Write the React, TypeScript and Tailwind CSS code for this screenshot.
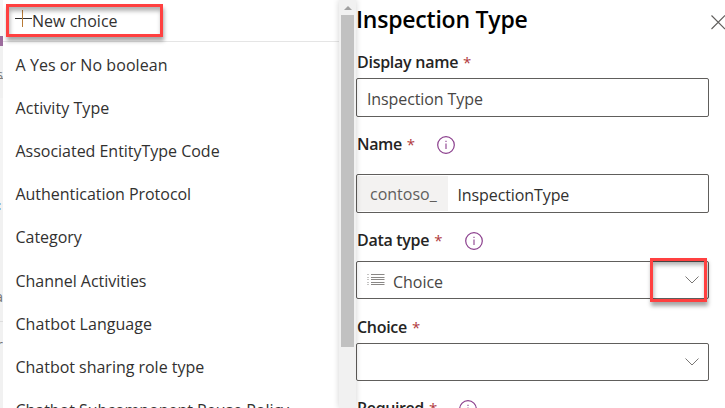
import React from "react";

const choices = [
  { label: "A Yes or No boolean", tracking: "tracking-[0.06px]" },
  { label: "Activity Type", tracking: "tracking-[0.06px]" },
  { label: "Associated EntityType Code", tracking: "tracking-[-0.02px]" },
  { label: "Authentication Protocol", tracking: "tracking-[-0.03px]" },
  { label: "Category", tracking: "tracking-[-0.03px]" },
  { label: "Channel Activities", tracking: "tracking-[-0.03px]" },
  { label: "Chatbot Language", tracking: "tracking-[0.04px]" },
  { label: "Chatbot sharing role type", tracking: "tracking-[-0.02px]" },
  { label: "Chatbot Subcomponent Reuse Policy", tracking: "tracking-[-0.03px]" },
];

function InfoIcon() {
  return (
    <svg width="18" height="18" viewBox="0 0 18 18" fill="none" stroke="#8b3f8d" className="mt-px shrink-0">
      <circle cx="9" cy="9" r="8.3" strokeWidth="1.2" />
      <path d="M9 7.5V13M9 4.8V6" strokeWidth="1.1" />
    </svg>
  );
}

function Chevron() {
  return (
    <svg width="16" height="10" viewBox="0 0 16 10" fill="none" stroke="#797775" className="shrink-0">
      <path d="M1.5 1.5L8 8L14.5 1.5" />
    </svg>
  );
}

function ListIcon() {
  return (
    <svg width="18" height="12" viewBox="0 0 18 12" fill="none" stroke="#8a8886" className="mb-px shrink-0">
      <path d="M4 .5H17.5M4 3.5H17.5M4 5.5H17.5M4 8.5H17.5M4 10.5H17.5M.5 .5H1.5M.5 3.5H1.5M.5 5.5H1.5M.5 8.5H1.5M.5 10.5H1.5" />
    </svg>
  );
}

function Label({ text, tracking, info }: { text: string; tracking: string; info?: string }) {
  return (
    <div className="flex h-6 items-center pl-px font-semibold whitespace-nowrap text-[#252423]">
      <span className={tracking}>{text}</span>
      <span className="ml-[5px] text-[15px] font-normal text-[#b0383d]">*</span>
      {info && (
        <span className={info}>
          <InfoIcon />
        </span>
      )}
    </div>
  );
}

const field = "flex w-[353px] items-center rounded-[2px] border border-[#605e5c] text-[#484644]";

export default function App() {
  return (
    <div className="relative flex h-[408px] w-[725px] overflow-hidden bg-white font-['Open_Sans','Noto_Sans',sans-serif] text-[16px] leading-6 text-[#323130]">
      <div className="flex w-[3px] shrink-0 flex-col overflow-hidden bg-[#f1f1f1] text-[13px] leading-4 text-[#777]">
        <div className="h-9 bg-[#f6f6f6]" />
        <div className="h-[10px] bg-[#9c6c9d]" />
        <div className="mt-5 flex h-[13px] justify-end border-b border-[#888]">s</div>
        <div className="mt-[19px] h-[104px] bg-[#f4f4f4] pt-[105px]">
          <div className="h-[7px] w-px border-y-2 border-[#91c8e6]" />
        </div>
        <div className="mt-[85px] flex h-4 justify-end text-[15px]">a</div>
        <div className="mt-[17px] border-t border-[#ddd]" />
        <div className="mt-[14px] flex h-4 justify-end text-[15px]">r</div>
      </div>

      <div className="w-[336px] shrink-0 overflow-hidden bg-white">
        <div className="flex h-[42px] items-center border-b border-[#e5e5e5] pl-3">
          <svg width="17" height="18" viewBox="0 0 17 18" fill="none" className="mb-[3px] shrink-0">
            <path d="M0 8.5H17" stroke="#323130" />
            <path d="M7.5 0V17" stroke="#b87a35" />
          </svg>
          <span className="tracking-[0.02px]">New choice</span>
        </div>
        <ul className="pt-px pl-[12.5px]">
          {choices.map((choice) => (
            <li key={choice.label} className="flex h-[43.2px] items-center whitespace-nowrap">
              <span className={choice.tracking}>{choice.label}</span>
            </li>
          ))}
        </ul>
      </div>

      <div className="z-10 flex w-[17px] shrink-0 flex-col items-center bg-[#f1f1f1] shadow-[0_0_6px_rgba(0,0,0,0.18)]">
        <div className="flex h-[15px] items-center">
          <svg width="8" height="4" viewBox="0 0 8 4">
            <path d="M0 4L4 0L8 4Z" fill="#a0a0a0" />
          </svg>
        </div>
        <div className="h-[332px] w-[13px] bg-[#c1c1c1]" />
      </div>

      <div className="w-[369px] shrink-0">
        <div className="flex h-[50px] pt-[3px]">
          <h1 className="h-8 whitespace-nowrap text-[23px] leading-8 font-semibold tracking-[-0.22px] text-black">Inspection Type</h1>
          <svg width="14" height="15" viewBox="0 0 14 15" fill="none" stroke="#605e5c" className="mt-3 mr-0 ml-auto shrink-0">
            <path d="M.5 .5L14 14M14 .5L.5 14" strokeWidth="1.1" />
          </svg>
        </div>
        <Label text="Display name" tracking="tracking-[-0.27px]" />
        <div className={`${field} mt-1 h-[39px] pl-[10px]`}>
          <span className="mt-[2px] tracking-[-0.1px]">Inspection Type</span>
        </div>
        <div className="mt-[15px]">
          <Label text="Name" tracking="tracking-[-0.4px]" info="ml-[22px]" />
        </div>
        <div className={`${field} mt-[18px] h-[39px]`}>
          <span className="flex h-[35px] w-[91px] items-center bg-[#f3f2f1] pl-[13px] text-[#605e5c]">contoso_</span>
          <span className="mt-[2px] ml-[9.5px] tracking-[-0.1px] text-[#323130]">InspectionType</span>
        </div>
        <div className="mt-[15px]">
          <Label text="Data type" tracking="tracking-[-0.3px]" info="ml-[23px]" />
        </div>
        <div className={`${field} mt-[9px] h-[38px] pl-[10px]`}>
          <ListIcon />
          <span className="mt-[3px] ml-2 tracking-[-0.03px]">Choice</span>
          <span className="mr-[8px] ml-auto">
            <Chevron />
          </span>
        </div>
        <div className="mt-4">
          <Label text="Choice" tracking="tracking-[-0.3px]" />
        </div>
        <div className={`${field} mt-1 h-[38px]`}>
          <span className="mr-[8px] ml-auto">
            <Chevron />
          </span>
        </div>
        <div className="mt-[15px]">
          <Label text="Required" tracking="tracking-[-0.4px]" info="ml-[22px]" />
        </div>
      </div>

      <div className="absolute top-1 left-[6px] z-20 h-[33px] w-[157px] border-3 border-[#ff4040] shadow-[1px_4px_4px_rgba(0,0,0,0.35),inset_1px_4px_4px_rgba(0,0,0,0.3)]" />
      <div className="absolute top-[258px] left-[650px] z-20 h-11 w-[57px] border-3 border-[#ff4040] shadow-[1px_4px_4px_rgba(0,0,0,0.35),inset_1px_4px_4px_rgba(0,0,0,0.3)]" />
    </div>
  );
}
